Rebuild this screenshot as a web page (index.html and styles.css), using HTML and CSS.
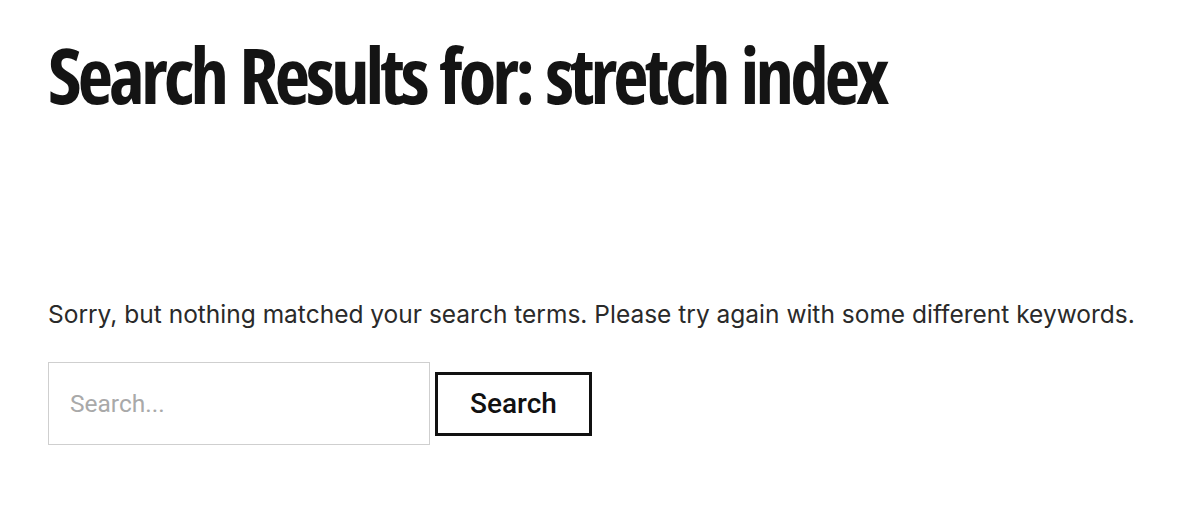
FILE: index.html
```html
<!DOCTYPE html>
<html lang="en">
<head>
<meta charset="utf-8">
<title>Search Results for: stretch index</title>
<link rel="stylesheet" href="styles.css">
</head>
<body>
<main class="page">
  <header class="page-header">
    <h1 class="page-title">Search Results for: stretch index</h1>
  </header>
  <section class="no-results">
    <p class="message">Sorry, but nothing matched your search terms. Please try again with some different keywords.</p>
    <form class="search-form" role="search">
      <input class="search-field" type="search" placeholder="Search...">
      <button class="search-submit" type="button">Search</button>
    </form>
  </section>
</main>
</body>
</html>
```
FILE: styles.css
```css
html, body {
  margin: 0;
  padding: 0;
  background: #fff;
}
.page {
  padding: 30px 48px 0;
}
.page-header {
  height: 268px;
}
.page-title {
  margin: 0;
  font-family: "Open Sans", "Liberation Sans", sans-serif;
  font-stretch: 75%;
  font-weight: 700;
  font-size: 77px;
  line-height: 90px;
  color: #141414;
  letter-spacing: -3.9px;
  word-spacing: 4px;
  white-space: nowrap;
}
.message {
  margin: 0 0 32px;
  font-family: Inter, "Noto Sans", sans-serif;
  font-size: 24.5px;
  line-height: 32px;
  color: #2a2a2a;
}
.search-form {
  display: flex;
  align-items: center;
  gap: 5px;
}
.search-field {
  box-sizing: border-box;
  width: 382px;
  height: 83px;
  margin: 0;
  padding: 0 21px;
  border: 1px solid #cfcfcf;
  background: #fff;
  font-family: Roboto, sans-serif;
  font-size: 24.5px;
  color: #333;
  outline: none;
}
.search-field::placeholder {
  color: #a9a9a9;
}
.search-submit {
  box-sizing: border-box;
  width: 157px;
  height: 64px;
  margin: 0;
  padding: 0;
  border: 3px solid #111;
  background: #fff;
  font-family: Roboto, sans-serif;
  font-weight: 500;
  font-size: 28px;
  color: #111;
}
```
